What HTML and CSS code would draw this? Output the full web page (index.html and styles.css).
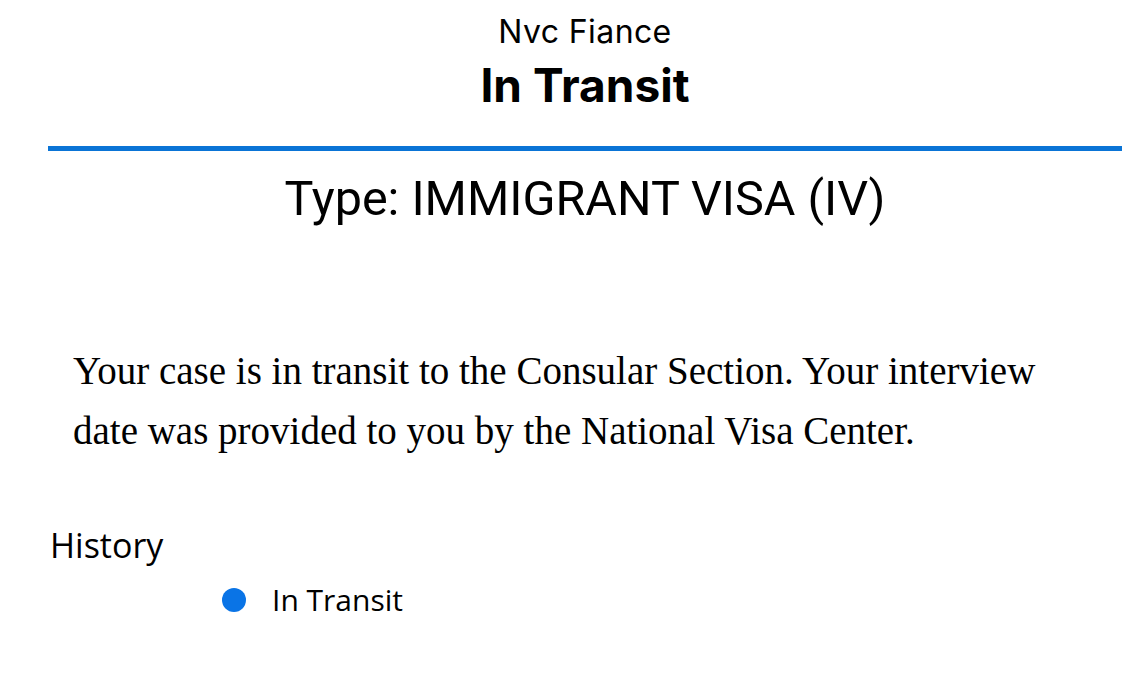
FILE: index.html
```html
<!DOCTYPE html>
<html>
<head>
<meta charset="utf-8">
<link rel="stylesheet" href="styles.css">
</head>
<body>
<div class="page">
  <header class="head">
    <div class="sub">Nvc Fiance</div>
    <h1 class="title">In Transit</h1>
  </header>
  <div class="rule"></div>
  <h2 class="type">Type: IMMIGRANT VISA (IV)</h2>
  <p class="desc">Your case is in transit to the Consular Section. Your interview date was provided to you by the National Visa Center.</p>
  <h3 class="hist">History</h3>
  <ul class="timeline">
    <li class="item"><span class="dot"></span><span class="label">In Transit</span></li>
  </ul>
</div>
</body>
</html>
```
FILE: styles.css
```css
html, body { margin: 0; padding: 0; background: #fff; }
body { width: 1147px; height: 698px; overflow: hidden; color: #000; }
.page { padding: 0 25px 0 48px; }
.head { display: flex; flex-direction: column; align-items: center; padding-top: 12px; }
.sub { font-family: Inter, sans-serif; font-size: 32px; line-height: 40px; letter-spacing: 0.4px; }
.title { margin: 0; font-family: Inter, sans-serif; font-weight: 700; font-size: 46px; line-height: 56px; position: relative; top: 5px; }
.rule { margin-top: 38px; height: 5px; background: #0a74d6; }
.type { margin: 20px 0 0; text-align: center; font-family: Roboto, sans-serif; font-weight: 400; font-size: 48.5px; line-height: 56px; }
.desc { margin: 114px 0 0 25px; width: 1000px; font-family: "Liberation Serif", serif; font-size: 39px; line-height: 60px; }
.hist { margin: 64px 0 0 2px; font-family: "Open Sans", sans-serif; font-weight: 400; font-size: 34px; line-height: 40px; }
.timeline { list-style: none; margin: 17px 0 0; padding: 0 0 0 174px; }
.item { display: flex; align-items: center; gap: 26px; }
.dot { width: 24px; height: 24px; border-radius: 50%; background: #0a74e6; }
.label { font-family: "Open Sans", sans-serif; font-size: 30px; line-height: 36px; }
```
